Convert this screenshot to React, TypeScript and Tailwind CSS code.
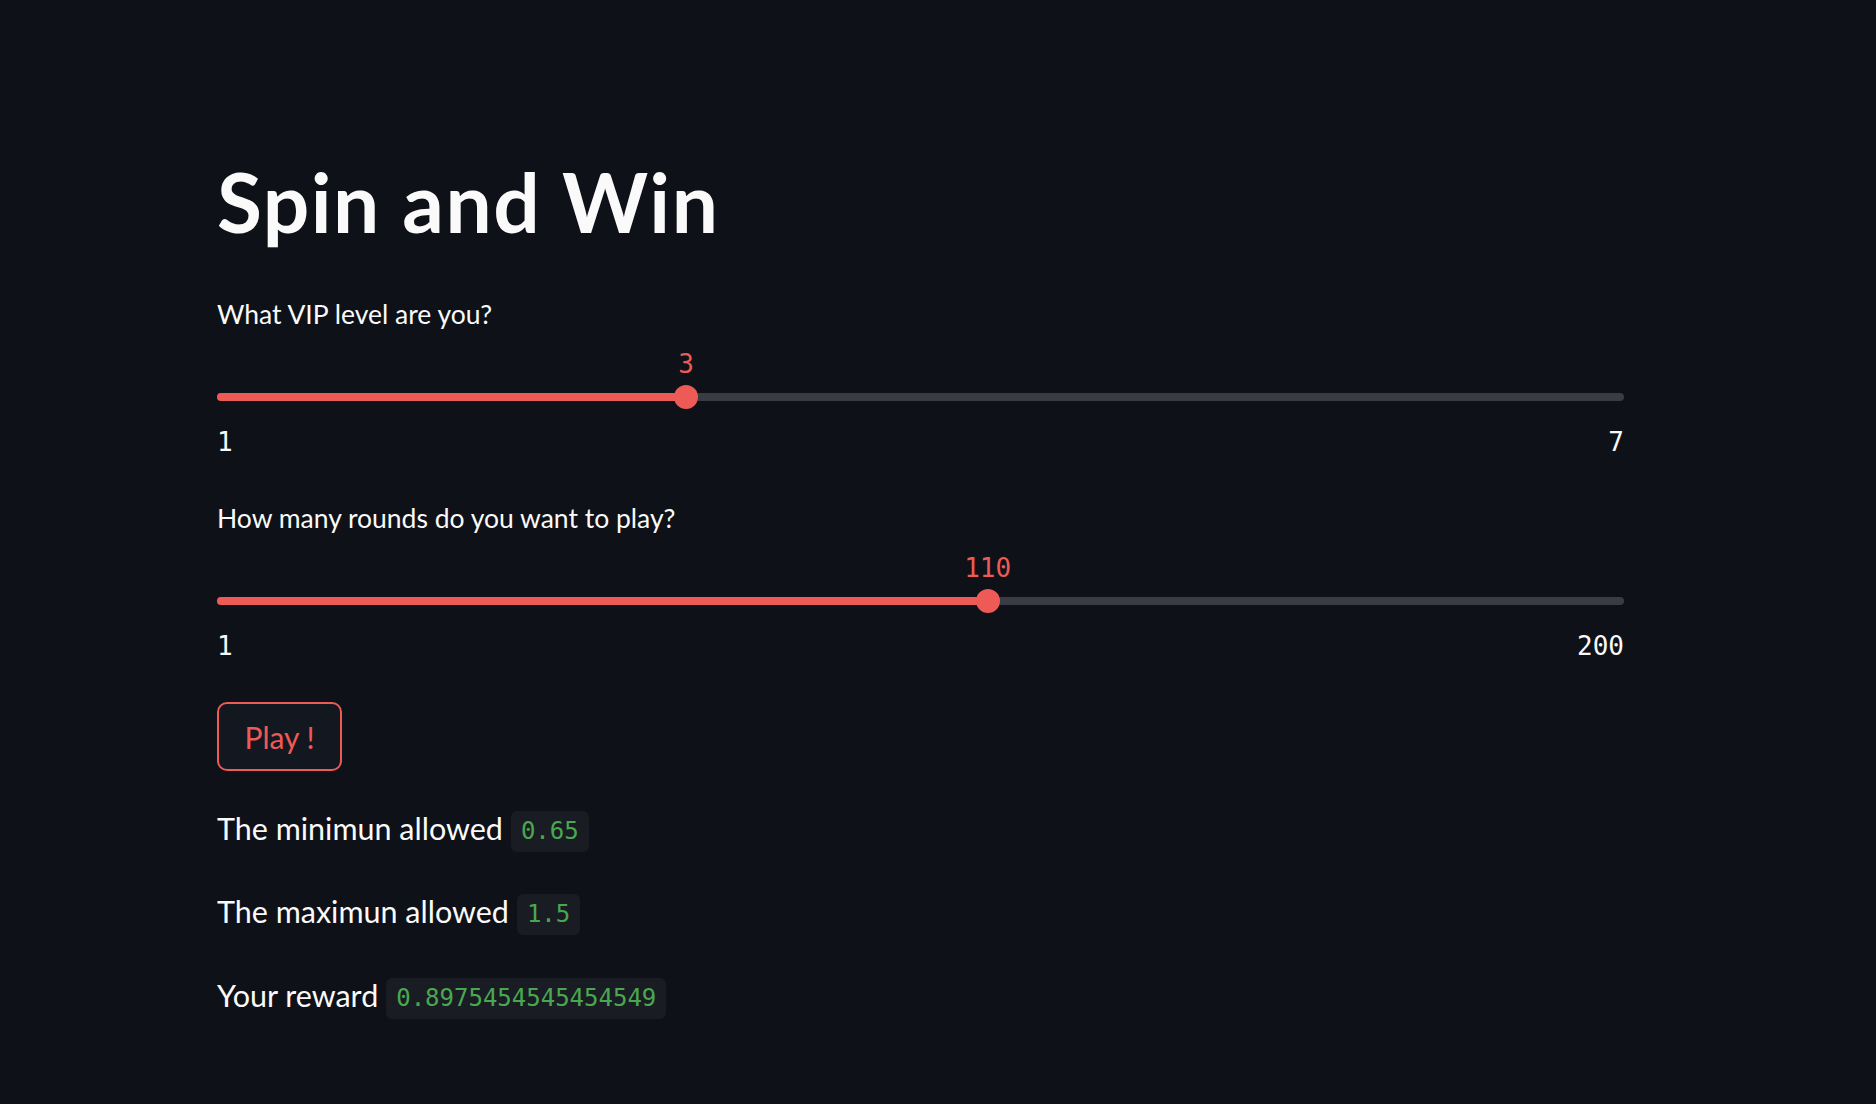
import React from "react";

function Slider({ label, value, min, max, top }: { label: string; value: number; min: number; max: number; top: string }) {
  const pct = ((value - min) / (max - min)) * 100;
  return (
    <div className={`flex flex-col ${top}`}>
      <div className="h-[26px] text-[26.5px] leading-[26px] text-[#fafafa]">{label}</div>
      <div className="relative mt-[24px] h-[26px]">
        <span
          className="absolute top-0 -translate-x-1/2 font-['DejaVu_Sans_Mono',monospace] text-[26px] leading-[26px] text-[#ee5a55]"
          style={{ left: `${pct}%` }}
        >
          {value}
        </span>
      </div>
      <div className="relative mt-[8px] flex h-[24px] items-center">
        <div className="relative h-[8px] w-full rounded-full bg-[#393c45]">
          <div className="absolute left-0 top-0 h-full rounded-full bg-[#ee5a55]" style={{ width: `${pct}%` }} />
        </div>
        <div
          className="absolute top-0 h-[24px] w-[24px] -translate-x-1/2 rounded-full bg-[#ee5a55]"
          style={{ left: `${pct}%` }}
        />
      </div>
      <div className="mt-[20px] flex h-[26px] justify-between font-['DejaVu_Sans_Mono',monospace] text-[26px] leading-[26px] text-[#fafafa]">
        <span>{min}</span>
        <span>{max}</span>
      </div>
    </div>
  );
}

function Line({ text, code, top }: { text: string; code: string; top: string }) {
  return (
    <div className={`flex items-start gap-[8px] ${top}`}>
      <span className="text-[30.5px] leading-[35px] text-[#fafafa]">{text}</span>
      <code className="h-[41px] rounded-[6px] bg-[#1a1c24] px-[10px] font-['DejaVu_Sans_Mono',monospace] text-[24px] leading-[41px] text-[#49a84f]">
        {code}
      </code>
    </div>
  );
}

export default function App() {
  return (
    <div className="min-h-[1104px] w-full bg-[#0e1117] font-['Lato',sans-serif]">
      <div className="ml-[217px] flex w-[1407px] flex-col pt-[160px]">
        <h1 className="h-[82px] text-[82px] font-bold leading-[82px] tracking-[1.5px] text-[#fafafa]">Spin and Win</h1>
        <Slider label="What VIP level are you?" value={3} min={1} max={7} top="mt-[59px]" />
        <Slider label="How many rounds do you want to play?" value={110} min={1} max={200} top="mt-[50px]" />
        <button className="mt-[43px] flex h-[69px] w-[125px] items-center justify-center rounded-[10px] border-2 border-[#ee5a55] bg-[#131720] text-[30px] leading-none text-[#ee5a55]">
          Play !
        </button>
        <Line text="The minimun allowed" code="0.65" top="mt-[40px]" />
        <Line text="The maximun allowed" code="1.5" top="mt-[42px]" />
        <Line text="Your reward" code="0.8975454545454549" top="mt-[43px]" />
      </div>
    </div>
  );
}
